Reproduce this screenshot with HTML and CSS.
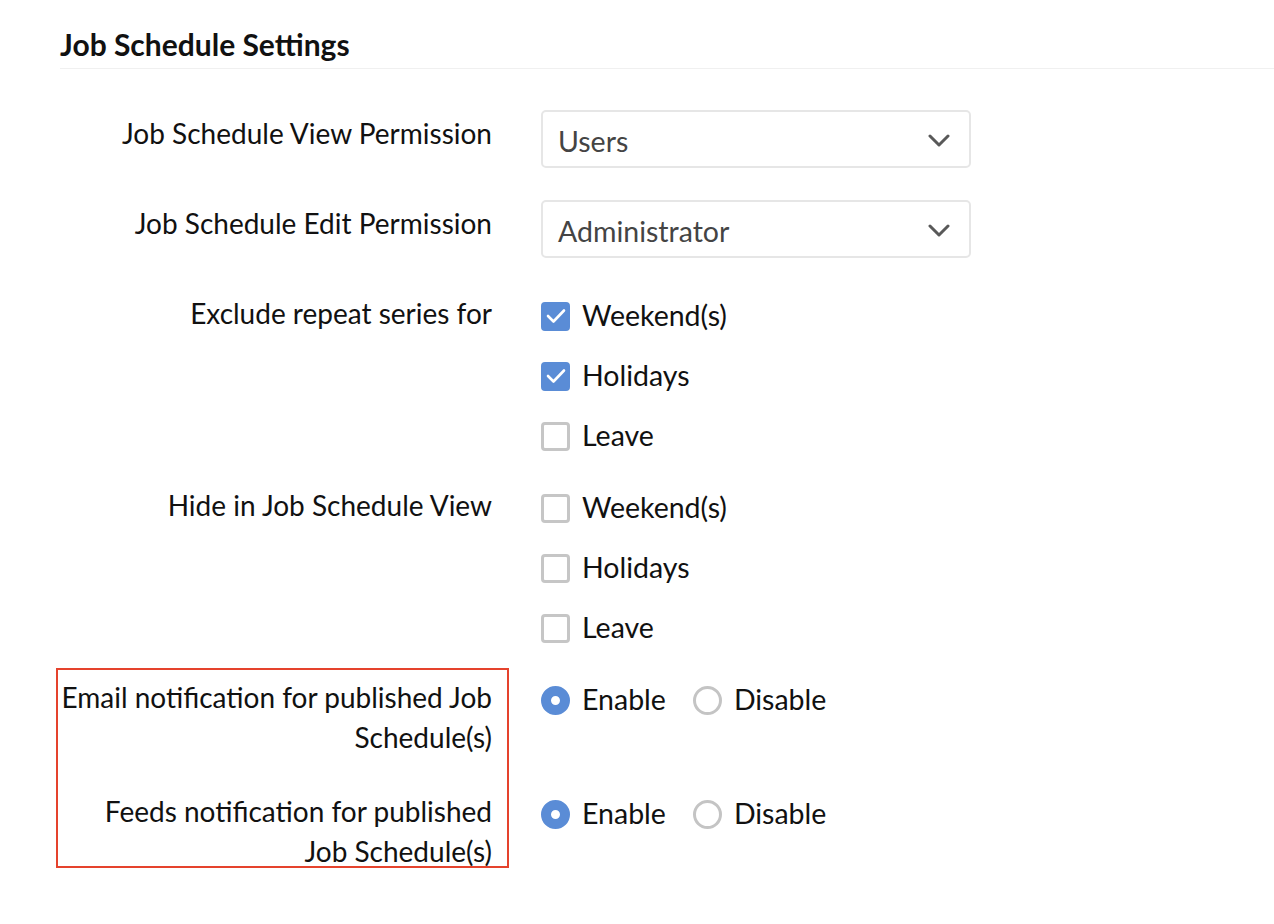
FILE: index.html
```html
<!DOCTYPE html>
<html lang="en">
<head>
    <meta charset="UTF-8">
    <title>Job Schedule Settings</title>
    <link rel="stylesheet" href="styles.css">
</head>
<body>
    <div class="settings">
        <div class="header">
            <h1>Job Schedule Settings</h1>
        </div>
        <div class="form">
            <div class="row">
                <div class="label">Job Schedule View Permission</div>
                <div class="controls">
                    <div class="select">
                        <span>Users</span>
                        <svg class="chevron" width="22" height="14" viewBox="0 0 22 14"><path d="M2 2 L11 11 L20 2" fill="none" stroke="#595959" stroke-width="3" stroke-linecap="round" stroke-linejoin="round"/></svg>
                    </div>
                </div>
            </div>
            <div class="row">
                <div class="label">Job Schedule Edit Permission</div>
                <div class="controls">
                    <div class="select">
                        <span>Administrator</span>
                        <svg class="chevron" width="22" height="14" viewBox="0 0 22 14"><path d="M2 2 L11 11 L20 2" fill="none" stroke="#595959" stroke-width="3" stroke-linecap="round" stroke-linejoin="round"/></svg>
                    </div>
                </div>
            </div>
            <div class="row">
                <div class="label">Exclude repeat series for</div>
                <div class="controls list">
                    <div class="option"><span class="checkbox checked"><svg width="20" height="16" viewBox="0 0 20 16"><path d="M2 8 L7.5 13.5 L18 2.5" fill="none" stroke="#fff" stroke-width="2.6" stroke-linecap="round" stroke-linejoin="round"/></svg></span>Weekend(s)</div>
                    <div class="option"><span class="checkbox checked"><svg width="20" height="16" viewBox="0 0 20 16"><path d="M2 8 L7.5 13.5 L18 2.5" fill="none" stroke="#fff" stroke-width="2.6" stroke-linecap="round" stroke-linejoin="round"/></svg></span>Holidays</div>
                    <div class="option"><span class="checkbox"></span>Leave</div>
                </div>
            </div>
            <div class="row">
                <div class="label">Hide in Job Schedule View</div>
                <div class="controls list">
                    <div class="option"><span class="checkbox"></span>Weekend(s)</div>
                    <div class="option"><span class="checkbox"></span>Holidays</div>
                    <div class="option"><span class="checkbox"></span>Leave</div>
                </div>
            </div>
            <div class="notify">
                <div class="highlight"></div>
                <div class="row">
                    <div class="label">Email notification for published Job Schedule(s)</div>
                    <div class="controls inline">
                        <div class="option"><span class="radio checked"></span>Enable</div>
                        <div class="option"><span class="radio"></span>Disable</div>
                    </div>
                </div>
                <div class="row">
                    <div class="label">Feeds notification for published Job Schedule(s)</div>
                    <div class="controls inline">
                        <div class="option"><span class="radio checked"></span>Enable</div>
                        <div class="option"><span class="radio"></span>Disable</div>
                    </div>
                </div>
            </div>
        </div>
    </div>
</body>
</html>
```

FILE: styles.css
```css
body {
    font-family: Lato, "Open Sans", sans-serif;
    margin: 0;
    padding: 0;
    background-color: #fff;
    color: #111;
}

.header {
    margin-left: 60px;
    height: 69px;
    border-bottom: 1px solid #f0f0f0;
    box-sizing: border-box;
}

.header h1 {
    margin: 0;
    padding-top: 26px;
    font-size: 30px;
    line-height: 36px;
    font-weight: bold;
    color: #111;
}

.form {
    display: flex;
    flex-direction: column;
    gap: 22px;
    padding-top: 41px;
}

.row {
    display: grid;
    grid-template-columns: 492px 1fr;
    column-gap: 49px;
    align-items: start;
}

.label {
    text-align: right;
    font-size: 28px;
    line-height: 40px;
    padding: 3px 0 9px 59px;
}

.select {
    width: 430px;
    height: 58px;
    box-sizing: border-box;
    border: 2px solid #e6e6e6;
    border-radius: 5px;
    display: flex;
    align-items: center;
    justify-content: space-between;
    padding: 3px 19px 0 15px;
    font-size: 28.5px;
    color: #444;
    margin-bottom: 10px;
}

.list {
    display: flex;
    flex-direction: column;
    gap: 10px;
}

.inline {
    display: flex;
    gap: 27px;
}

.option {
    display: flex;
    align-items: center;
    height: 50px;
    font-size: 28.5px;
    gap: 12px;
}

.checkbox {
    width: 29px;
    height: 29px;
    box-sizing: border-box;
    border: 3px solid #c6c6c6;
    border-radius: 4px;
    display: flex;
    align-items: center;
    justify-content: center;
    margin-top: 2px;
}

.checkbox.checked {
    background-color: #5a8cd6;
    border-color: #5a8cd6;
}

.radio {
    width: 29px;
    height: 29px;
    box-sizing: border-box;
    border: 3px solid #c4c4c4;
    border-radius: 50%;
    margin-top: 2px;
}

.radio.checked {
    border: 10px solid #5a8cd6;
    background-color: #fff;
}

.notify {
    position: relative;
    display: flex;
    flex-direction: column;
    gap: 22px;
}

.highlight {
    position: absolute;
    left: 56px;
    top: -6px;
    width: 453px;
    height: 200px;
    box-sizing: border-box;
    border: 2px solid #e5432d;
}
```
